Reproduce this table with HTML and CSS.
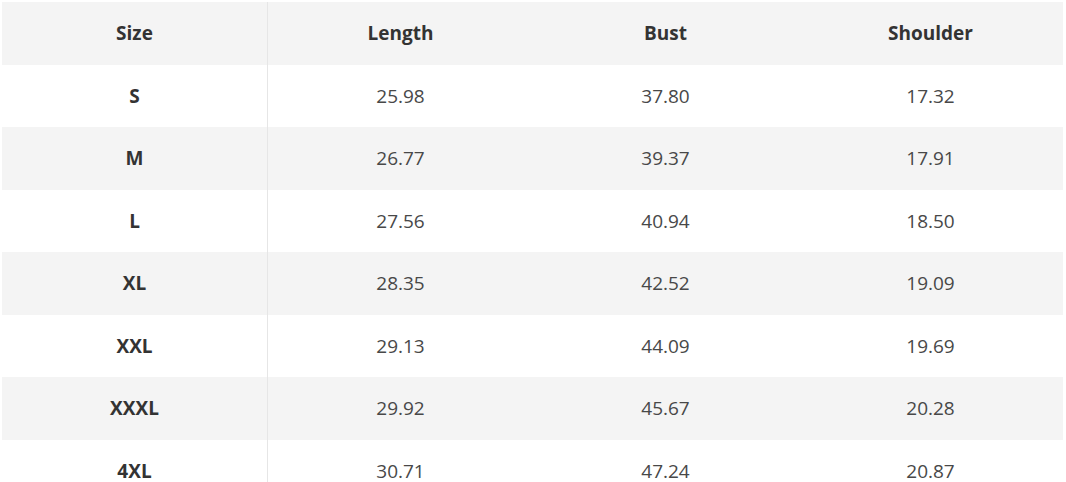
FILE: index.html
```html
<!DOCTYPE html>
<html>
<head>
<meta charset="utf-8">
<link rel="stylesheet" href="styles.css">
</head>
<body>
<table class="size-table">
  <thead>
    <tr class="row shade"><th>Size</th><th>Length</th><th>Bust</th><th>Shoulder</th></tr>
  </thead>
  <tbody>
    <tr class="row"><th>S</th><td>25.98</td><td>37.80</td><td>17.32</td></tr>
    <tr class="row shade"><th>M</th><td>26.77</td><td>39.37</td><td>17.91</td></tr>
    <tr class="row"><th>L</th><td>27.56</td><td>40.94</td><td>18.50</td></tr>
    <tr class="row shade"><th>XL</th><td>28.35</td><td>42.52</td><td>19.09</td></tr>
    <tr class="row"><th>XXL</th><td>29.13</td><td>44.09</td><td>19.69</td></tr>
    <tr class="row shade"><th>XXXL</th><td>29.92</td><td>45.67</td><td>20.28</td></tr>
    <tr class="row"><th>4XL</th><td>30.71</td><td>47.24</td><td>20.87</td></tr>
  </tbody>
</table>
</body>
</html>
```
FILE: styles.css
```css
html, body {
  margin: 0;
  padding: 0;
  background: #ffffff;
  overflow: hidden;
}
body {
  padding: 2px 0 0 2px;
  font-family: "Open Sans", "Liberation Sans", sans-serif;
}
.size-table {
  width: 1060px;
  border-collapse: collapse;
  table-layout: fixed;
}
.row {
  height: 62.5px;
}
.row.shade {
  background: #f4f4f4;
}
.size-table th,
.size-table td {
  text-align: center;
  vertical-align: middle;
  padding: 0;
  font-size: 19px;
  width: 265px;
}
.size-table th {
  font-weight: 700;
  color: #333333;
}
.size-table td {
  font-weight: 400;
  color: #484848;
}
.size-table tr > :first-child {
  border-right: 1px solid #e6e6e6;
}
```
